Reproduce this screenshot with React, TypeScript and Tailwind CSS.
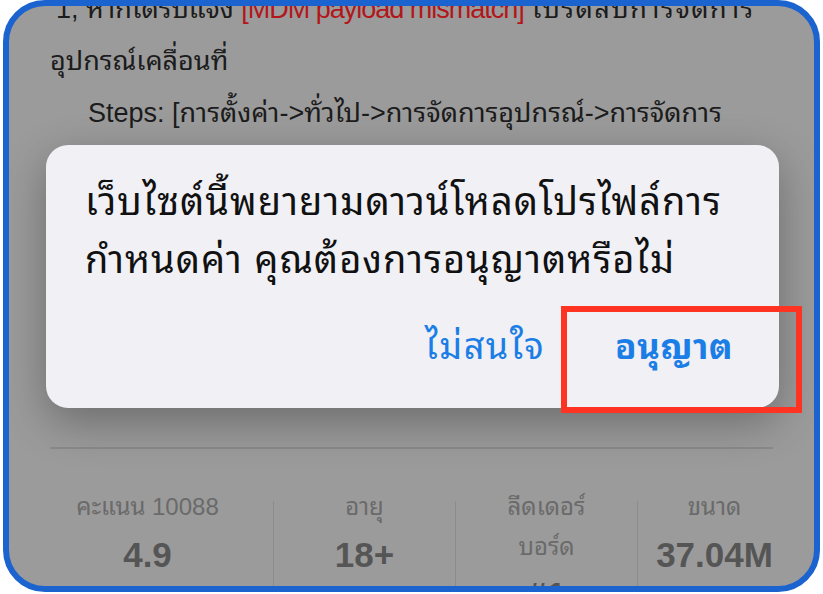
import React from "react";

const thai = { fontFamily: '"Liberation Sans", "Noto Sans Thai Looped", "Noto Sans Thai", "Noto Sans", sans-serif' };
const num = { fontFamily: '"Liberation Sans", sans-serif' };

export default function App() {
  return (
    <div className="w-[823px] h-[594px] bg-white overflow-hidden" style={thai}>
      <div className="relative ml-[3px] w-[817px] h-[592px] border-[6px] border-[#1b63cf] rounded-[42px] overflow-hidden bg-[#9b9b9b]">
        <div className="pl-[41px] pr-[30px] -mt-[23px] text-[27px] leading-[52px] text-[#1c1c1c] whitespace-nowrap">
          <div className="pl-[6px]">
            1, หากได้รับแจ้ง <span className="text-[#b3161a] tracking-[-1px]">[MDM payload mismatch]</span>{" "}
            <span className="tracking-[1.5px]">โปรดลบการจัดการ</span>
          </div>
          <div>อุปกรณ์เคลื่อนที่</div>
          <div className="pl-[38px]">Steps: [การตั้งค่า-&gt;ทั่วไป-&gt;การจัดการอุปกรณ์-&gt;การจัดการ</div>
        </div>
        <div className="mx-[41px] mt-[308px] h-[2px] bg-[#8a8a8a]" />
        <div className="grid grid-cols-[251px_182px_182px_154px] pl-[13px] mt-[38px] text-center">
          <div className="flex flex-col items-center">
            <div className="text-[24px] leading-[40px] text-[#6a6a6a]">คะแนน 10088</div>
            <div className="text-[35px] leading-[56px] font-bold text-[#555]" style={num}>4.9</div>
          </div>
          <div className="flex flex-col items-center border-l border-[#8c8c8c] mt-[14px] -mb-[40px]">
            <div className="-mt-[14px] text-[24px] leading-[40px] text-[#6a6a6a]">อายุ</div>
            <div className="text-[35px] leading-[56px] font-bold text-[#555]" style={num}>18+</div>
          </div>
          <div className="flex flex-col items-center border-l border-[#8c8c8c] mt-[14px] -mb-[40px]">
            <div className="-mt-[14px] text-[24px] leading-[40px] text-[#6a6a6a]">ลีดเดอร์</div>
            <div className="text-[24px] leading-[40px] text-[#6a6a6a]">บอร์ด</div>
            <div className="text-[35px] leading-[56px] font-bold text-[#555]" style={num}>#1</div>
          </div>
          <div className="flex flex-col items-center border-l border-[#8c8c8c] mt-[14px] -mb-[40px]">
            <div className="-mt-[14px] text-[24px] leading-[40px] text-[#6a6a6a]">ขนาด</div>
            <div className="text-[35px] leading-[56px] font-bold text-[#555]" style={num}>37.04M</div>
          </div>
        </div>

        <div className="absolute left-[37px] top-[139px] w-[733px] h-[263px] rounded-[22px] bg-[#f0f0f5] shadow-[0_14px_44px_rgba(0,0,0,0.3)] flex flex-col">
          <div className="px-[39px] pt-[28px] text-[38px] tracking-[1px] leading-[58px] text-[#111]">
            <div>เว็บไซต์นี้พยายามดาวน์โหลดโปรไฟล์การ</div>
            <div>กำหนดค่า คุณต้องการอนุญาตหรือไม่</div>
          </div>
          <div className="flex justify-end items-center pr-[46px] mt-[31px] gap-[70px]">
            <span className="text-[36px] tracking-[1.5px] text-[#1b7ee6]">ไม่สนใจ</span>
            <span className="text-[35px] tracking-[0.5px] font-bold text-[#1b7ee6]">อนุญาต</span>
          </div>
        </div>

        <div className="absolute left-[552px] top-[300px] w-[241px] h-[107px] border-[6px] border-[#ff3322]" />
      </div>
    </div>
  );
}
